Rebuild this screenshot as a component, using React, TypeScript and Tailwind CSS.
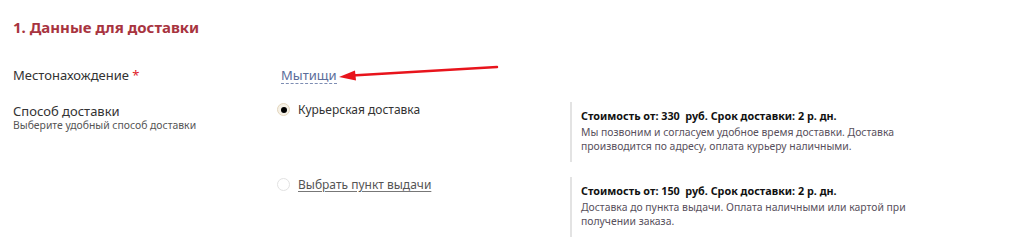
const ink = "text-[#333333]";

const DeliveryOption = ({
	label,
	checked,
	link,
	price,
	desc,
}: {
	label: string;
	checked?: boolean;
	link?: boolean;
	price: string;
	desc: string;
}) => {
	return (
		<div className="flex">
			<div className="w-[289px] flex items-start gap-[8px]">
				<span
					className={`ml-[-4px] mt-[1px] w-[13px] h-[13px] rounded-full border flex items-center justify-center ${
						checked ? "border-[#e3d6bd] bg-[#f6f1e6]" : "border-[#e2e2e2] bg-white"
					}`}
				>
					{checked && <span className="w-[6px] h-[6px] rounded-full bg-black" />}
				</span>
				<span
					className={
						link
							? "text-[12px] text-[#555] underline underline-offset-2 decoration-[#777] leading-[15px]"
							: `text-[12px] ${ink} leading-[15px]`
					}
				>
					{label}
				</span>
			</div>
			<div className="w-[340px] border-l-2 border-[#e3e3e3] pl-[9px] pt-[6px] h-[60px]">
				<div className="text-[10.8px] font-bold text-[#111] leading-[16px] whitespace-pre">
					{price}
				</div>
				<div className="text-[10.4px] text-[#58505c] leading-[14px] mt-[1px]">{desc}</div>
			</div>
		</div>
	);
};

export default function App() {
	return (
		<div
			className="relative w-[1024px] h-[252px] bg-white pl-[13px] pt-[16px]"
			style={{ fontFamily: '"Noto Sans", "Open Sans", sans-serif' }}
		>
			<h2 className="text-[15px] font-bold text-[#a8343f] leading-[22px]">
				1. Данные для доставки
			</h2>

			<div className="flex mt-[28px] items-center">
				<div className={`w-[268px] text-[13px] ${ink} leading-[18px]`}>
					Местонахождение <span className="text-[#e0202a]">*</span>
				</div>
				<span className="text-[13px] text-[#5b6d9a] border-b border-dashed border-[#7d8db3] leading-[16px]">
					Мытищи
				</span>
			</div>

			<div className="flex mt-[18px]">
				<div className="w-[268px] shrink-0">
					<div className={`text-[13px] ${ink} leading-[16px] mt-[1px]`}>Способ доставки</div>
					<div className="text-[10.4px] text-[#555] leading-[13px]">
						Выберите удобный способ доставки
					</div>
				</div>
				<div className="flex flex-col gap-[15px]">
					<DeliveryOption
						checked
						label="Курьерская доставка"
						price="Стоимость от: 330  руб. Срок доставки: 2 р. дн."
						desc="Мы позвоним и согласуем удобное время доставки. Доставка производится по адресу, оплата курьеру наличными."
					/>
					<DeliveryOption
						link
						label="Выбрать пункт выдачи"
						price="Стоимость от: 150  руб. Срок доставки: 2 р. дн."
						desc="Доставка до пункта выдачи. Оплата наличными или картой при получении заказа."
					/>
				</div>
			</div>

			{/* red pointer arrow */}
			<svg className="absolute left-0 top-0 pointer-events-none" width="1024" height="252">
				<line x1="497" y1="67" x2="352" y2="75.6" stroke="#e8141c" strokeWidth="2.5" strokeLinecap="round" />
				<polygon points="339,77 355,70.5 356,80.5" fill="#e8141c" />
			</svg>
		</div>
	);
}
